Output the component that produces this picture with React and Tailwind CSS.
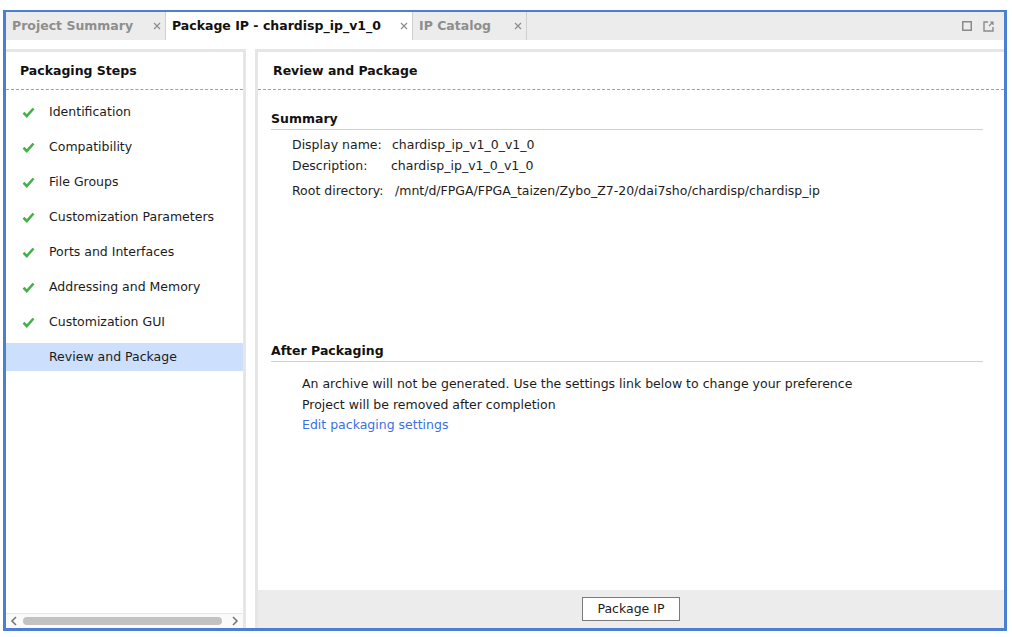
import React from "react";

const STEPS = [
  "Identification",
  "Compatibility",
  "File Groups",
  "Customization Parameters",
  "Ports and Interfaces",
  "Addressing and Memory",
  "Customization GUI",
];

function CloseX() {
  return (
    <svg width="8" height="8" viewBox="0 0 8 8" className="shrink-0">
      <path d="M1 1L7 7M7 1L1 7" stroke="#8c8c8c" strokeWidth="1.2" />
    </svg>
  );
}

function Check() {
  return (
    <svg width="13" height="11" viewBox="0 0 13 11">
      <path d="M1.5 5.8L4.8 9L11.5 1.5" fill="none" stroke="#45b04a" strokeWidth="2.6" strokeLinejoin="miter" />
    </svg>
  );
}

function Tab({ label, active, width }) {
  return (
    <div
      className={`flex h-full items-center justify-between border-r border-[#cfcfcf] pl-[6px] pr-[4px] font-bold ${
        active ? "bg-white text-[#111]" : "text-[#8e8e8e]"
      }`}
      style={{ width }}
    >
      <span>{label}</span>
      <CloseX />
    </div>
  );
}

export default function App() {
  return (
    <div
      className="h-[637px] w-[1012px] bg-white pl-[3px] pt-[10px] text-[12.5px] text-[#1c1c1c]"
      style={{ fontFamily: '"DejaVu Sans", "Noto Sans", sans-serif' }}
    >
      <div className="flex h-[621px] w-[1004px] flex-col border-[3px] border-t-2 border-[#4a7fd2] bg-white">
        {/* tab bar */}
        <div className="flex h-[28px] shrink-0 items-stretch bg-[#ececec]">
          <Tab label="Project Summary" width={160} />
          <Tab label="Package IP - chardisp_ip_v1_0" active width={247} />
          <Tab label="IP Catalog" width={114} />
          <div className="flex flex-1 items-center justify-end gap-[11px] pr-[10px]">
            <svg width="10" height="10" viewBox="0 0 10 10">
              <rect x="0.75" y="0.75" width="8.5" height="8.5" fill="none" stroke="#8a8a8a" strokeWidth="1.5" />
            </svg>
            <svg width="11" height="11" viewBox="0 0 11 11">
              <path d="M5 1H1V10H10V6" fill="none" stroke="#8a8a8a" strokeWidth="1.4" />
              <path d="M6 5L10 1M7 1H10V4" fill="none" stroke="#8a8a8a" strokeWidth="1.2" />
            </svg>
          </div>
        </div>

        {/* panels */}
        <div className="mt-[9px] flex min-h-0 flex-1">
          {/* left panel */}
          <div className="flex w-[240px] shrink-0 flex-col border-r-[3px] border-t-[3px] border-[#e6e6e6]">
            <div className="flex h-[37px] shrink-0 items-center pl-[14px] pt-[2px] font-bold text-[#111]">
              Packaging Steps
            </div>
            <div className="border-t border-dashed border-[#a0a0a0]" />
            <div className="flex-1 pt-[8px]">
              {STEPS.map((s) => (
                <div key={s} className="mb-[7px] flex h-[28px] items-center">
                  <div className="flex w-[43px] justify-center pl-[2px]">
                    <Check />
                  </div>
                  <span>{s}</span>
                </div>
              ))}
              <div className="flex h-[28px] items-center bg-[#cce0fd] pl-[43px]">Review and Package</div>
            </div>
            <div className="flex h-[15px] shrink-0 items-center border-t border-[#e8e8e8] bg-[#fafafa]">
              <svg width="16" height="12" viewBox="0 0 16 12" className="shrink-0">
                <path d="M10 2L6 6L10 10" fill="none" stroke="#777" strokeWidth="1.6" />
              </svg>
              <div className="ml-[1px] h-[8px] w-[199px] rounded-full bg-[#c2c2c2]" />
              <div className="flex-1" />
              <svg width="16" height="12" viewBox="0 0 16 12" className="shrink-0">
                <path d="M6 2L10 6L6 10" fill="none" stroke="#777" strokeWidth="1.6" />
              </svg>
            </div>
          </div>

          {/* right panel */}
          <div className="ml-[9px] flex min-w-0 flex-1 flex-col border-l-[3px] border-t-[3px] border-[#e6e6e6]">
            <div className="flex h-[37px] shrink-0 items-center pl-[15px] pt-[2px] font-bold text-[#111]">
              Review and Package
            </div>
            <div className="border-t border-dashed border-[#a0a0a0]" />
            <div className="flex-1 pl-[13px] pr-[21px]">
              <div className="mt-[20px] flex h-[20px] items-end border-b border-[#cfcfcf] pb-[2px] font-bold leading-[16px] text-[#111]">
                Summary
              </div>
              <div className="pl-[21px] leading-[16px]">
                <div className="mt-[7px] flex">
                  <span className="w-[100px]">Display name:</span>
                  <span>chardisp_ip_v1_0_v1_0</span>
                </div>
                <div className="mt-[5px] flex">
                  <span className="w-[99px]">Description:</span>
                  <span>chardisp_ip_v1_0_v1_0</span>
                </div>
                <div className="mt-[9px] flex">
                  <span className="w-[103px]">Root directory:</span>
                  <span>/mnt/d/FPGA/FPGA_taizen/Zybo_Z7-20/dai7sho/chardisp/chardisp_ip</span>
                </div>
              </div>

              <div className="mt-[143px] flex h-[20px] items-end border-b border-[#cfcfcf] pb-[2px] font-bold leading-[16px] text-[#111]">
                After Packaging
              </div>
              <div className="pl-[31px] leading-[16px]">
                <div className="mt-[14px]">
                  An archive will not be generated. Use the settings link below to change your preference
                </div>
                <div className="mt-[5px]">Project will be removed after completion</div>
                <div className="mt-[4px] text-[#3b6fe3]">Edit packaging settings</div>
              </div>
            </div>
            <div className="flex h-[38px] shrink-0 items-center justify-center bg-[#ececec]">
              <button
                type="button"
                className="h-[24px] w-[98px] border border-[#7a7a7a] bg-white text-[12.5px] text-[#1c1c1c]"
              >
                Package IP
              </button>
            </div>
          </div>
        </div>
      </div>
    </div>
  );
}
